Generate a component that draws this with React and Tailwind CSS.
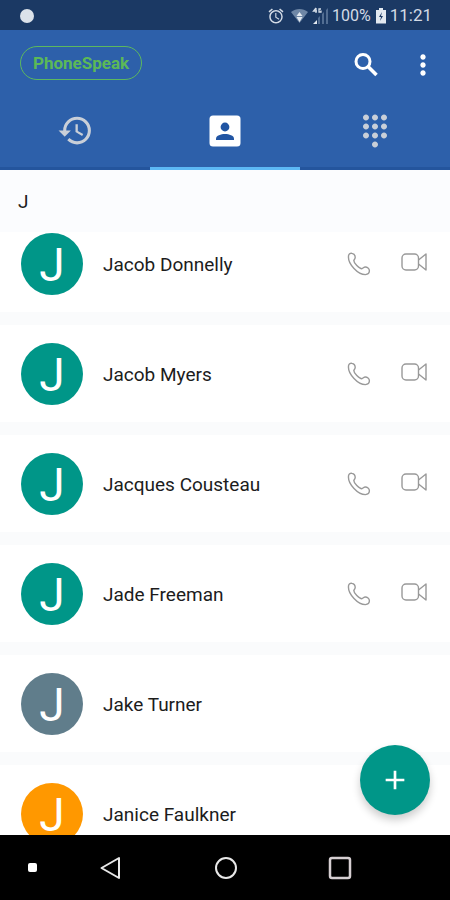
import React from 'react';
import { MdAdd, MdAlarm, MdDialpad, MdHistory, MdMoreVert } from 'react-icons/md';

const contacts = [
  { name: 'Jacob Donnelly', color: 'bg-[#009688]', callable: true },
  { name: 'Jacob Myers', color: 'bg-[#009688]', callable: true },
  { name: 'Jacques Cousteau', color: 'bg-[#009688]', callable: true },
  { name: 'Jade Freeman', color: 'bg-[#009688]', callable: true },
  { name: 'Jake Turner', color: 'bg-[#607d8b]', callable: false },
  { name: 'Janice Faulkner', color: 'bg-[#ff9800]', callable: false },
];

function SearchIcon() {
  return (
    <svg width="32" height="32" viewBox="0 0 32 32" fill="none" stroke="#fff">
      <circle cx="13" cy="12.5" r="7" strokeWidth="3" />
      <path d="M18 17.5L26.5 26" strokeWidth="3.500" />
    </svg>
  );
}

function PhoneIcon() {
  return (
    <svg width="24" height="24" viewBox="0 0 24 24" fill="none" stroke="#999" strokeWidth="1.4" strokeLinejoin="round">
      <path d="M1.6 3.4C2 1.6 3.4 1 5 1.4C7 1.8 8.2 3.6 8.2 5.6C8.2 7 7 7.6 6.8 8.6C6.8 10 8 11.8 9.8 13.6C11.6 15.4 13.4 16.8 14.8 16.8C15.8 16.6 16.4 15.2 18 15C20.2 14.8 22.4 16.6 22.4 18.8C22.4 20.8 20.8 22.4 18.4 22.6C14.6 22.6 10.2 19.8 7 16.4C3.8 13 .8 8 1.6 3.4Z" />
    </svg>
  );
}

function VideoIcon() {
  return (
    <svg width="26" height="20" viewBox="0 0 26 20" fill="none" stroke="#999" strokeWidth="1.4" strokeLinejoin="round">
      <rect x="1" y="2" width="16.5" height="16" rx="4" />
      <path d="M17.5 8L25 2V18L17.5 12" />
    </svg>
  );
}

function ContactsIcon() {
  return (
    <svg width="32" height="32" viewBox="0 0 32 32">
      <rect x="0.5" y="0.5" width="31" height="31" rx="3.5" fill="#fff" />
      <circle cx="16" cy="12" r="4.4" fill="#2155a3" />
      <path d="M7 25V23.5C7 20.5 12 19 16 19S25 20.5 25 23.5V25Z" fill="#2155a3" />
    </svg>
  );
}

function StatusBar() {
  return (
    <div className="flex h-[30px] shrink-0 items-center bg-[#1b3964] pt-0.5 pr-[18px] pl-5 text-base text-[#d3dbe6]">
      <span className="h-[14px] w-[14px] rounded-full bg-[#dbe2ea]" />
      <div className="ml-auto flex items-center">
        <MdAlarm size={18} />
        <svg className="ml-[6px]" width="17" height="16" viewBox="0 0 17 16">
          <path d="M0 4C5 0 12 0 17 4L8.5 15Z" fill="#6f87a6" />
          <path d="M8.5 4L11.5 8H5.5ZM8.5 14L5.5 9H11.5Z" fill="#e3e9f0" />
        </svg>
        <svg className="ml-1" width="17" height="18" viewBox="0 0 17 18">
          <path d="M4 1L1.5 4H5M4 1V6M9 2H7V5H9V3.5" fill="none" stroke="#d3dbe6" strokeWidth="1.3" />
          <path d="M1 17L5 13V17Z" fill="#e3e9f0" />
          <path d="M6 17V11L8 9V17ZM10 17V7L12 5V17ZM14 17V3L16 1V17Z" fill="#526d92" />
        </svg>
        <span className="ml-[3px]">100%</span>
        <svg className="ml-1" width="12" height="16" viewBox="0 0 12 16">
          <path d="M4 0H8V2H11V15.5H1V2H4Z" fill="#e3e9f0" />
          <path d="M7 4L4 9H6L5 13L8 8H6Z" fill="#1b3964" />
        </svg>
        <span className="ml-[3px] text-[17px]">11:21</span>
      </div>
    </div>
  );
}

function ContactRow({ name, color, callable }) {
  return (
    <li className="mb-[13px] flex h-[97px] items-center bg-white pr-[23px] pl-[21px]">
      <span className={`flex h-[62px] w-[62px] shrink-0 items-center justify-center rounded-full pt-1 text-[46px] text-white ${color}`}>
        J
      </span>
      <span className="ml-5 flex-1 pt-1 text-[19px] text-[#1c1c1c]">{name}</span>
      {callable && (
        <div className="flex items-center gap-[30px]">
          <button type="button" aria-label={`Call ${name}`}>
            <PhoneIcon />
          </button>
          <button type="button" aria-label={`Video call ${name}`} className="pb-1">
            <VideoIcon />
          </button>
        </div>
      )}
    </li>
  );
}

export default function App() {
  return (
    <div className="flex h-screen flex-col overflow-hidden bg-white font-[Roboto,sans-serif]">
      <StatusBar />

      {/* Toolbar and tabs */}
      <header className="shrink-0 bg-[#2d60aa]">
        <div className="flex h-[66px] items-center pr-[11px] pl-5">
          <button type="button" className="h-[34px] rounded-full border border-[#5cb85f] px-3 text-[17px] leading-8 font-bold text-[#5cb957]">
            PhoneSpeak
          </button>
          <button type="button" aria-label="Search" className="ml-auto pt-1">
            <SearchIcon />
          </button>
          <button type="button" aria-label="More options" className="ml-[25px] pt-1 text-white">
            <MdMoreVert size={32} />
          </button>
        </div>
        <nav className="grid h-[74px] grid-cols-3 text-[#c9cfd8]">
          <button type="button" aria-label="Recent calls" className="flex items-center justify-center border-b-3 border-[#24559d] pb-0.5">
            <MdHistory size={37} />
          </button>
          <button type="button" aria-label="Contacts" className="flex items-center justify-center border-b-3 border-[#5cb8f5] pb-0.5 text-white">
            <ContactsIcon />
          </button>
          <button type="button" aria-label="Dialpad" className="flex items-center justify-center border-b-3 border-[#24559d] pb-0.5">
            <MdDialpad size={36} />
          </button>
        </nav>
      </header>

      {/* Contact list, scrolled a little under its letter heading */}
      <main className="relative min-h-0 flex-1 overflow-hidden bg-[#fafbfc]">
        <h2 className="relative z-10 flex h-[62px] items-center bg-[#fbfcfe] pt-0.5 pl-[18px] text-[19px] text-[#1c1c1c]">J</h2>
        <ul className="-mt-[17px]">
          {contacts.map((contact) => (
            <ContactRow key={contact.name} {...contact} />
          ))}
        </ul>
        <button
          type="button"
          aria-label="Add contact"
          className="absolute right-5 bottom-5 flex h-[70px] w-[70px] items-center justify-center rounded-full bg-[#009688] text-white shadow-[0_5px_9px_rgba(0,0,0,0.2)]"
        >
          <MdAdd size={32} />
        </button>
      </main>

      {/* System navigation */}
      <footer className="flex h-[65px] shrink-0 items-center bg-black pl-7">
        <span className="h-[9px] w-[9px] rounded-xs bg-white" />
        <div className="flex flex-1 items-center justify-between pr-[98px] pl-[62px]">
          <button type="button" aria-label="Back">
            <svg width="24" height="24" viewBox="0 0 24 24" fill="none" stroke="#e8e8e8" strokeWidth="2" strokeLinejoin="round">
              <path d="M2.5 12L20 2V22Z" />
            </svg>
          </button>
          <button type="button" aria-label="Home">
            <svg width="24" height="24" viewBox="0 0 24 24" fill="none" stroke="#e8e8e8" strokeWidth="2">
              <circle cx="12" cy="12" r="10" />
            </svg>
          </button>
          <button type="button" aria-label="Overview">
            <svg width="24" height="24" viewBox="0 0 24 24" fill="none" stroke="#d6cfd2" strokeWidth="2.5">
              <rect x="2" y="2" width="20" height="20" rx="2" />
            </svg>
          </button>
        </div>
      </footer>
    </div>
  );
}
